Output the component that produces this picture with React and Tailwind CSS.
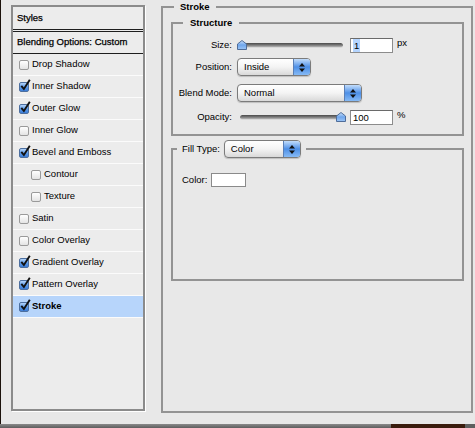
import React from "react";

const items = [
  { label: "Drop Shadow", checked: false },
  { label: "Inner Shadow", checked: true },
  { label: "Outer Glow", checked: true },
  { label: "Inner Glow", checked: false },
  { label: "Bevel and Emboss", checked: true },
  { label: "Contour", checked: false, indent: true },
  { label: "Texture", checked: false, indent: true },
  { label: "Satin", checked: false },
  { label: "Color Overlay", checked: false },
  { label: "Gradient Overlay", checked: true },
  { label: "Pattern Overlay", checked: true },
  { label: "Stroke", checked: true, selected: true },
];

function Check({ checked }) {
  return (
    <span className="relative block w-[10px] h-[10px] shrink-0">
      <span
        className={
          checked
            ? "block w-full h-full rounded-[2px] border border-[#4d6f9f] bg-gradient-to-b from-[#b4d4fa] via-[#5d9be8] to-[#3b7cd6]"
            : "block w-full h-full rounded-[2px] border border-[#9a9a9a] bg-gradient-to-b from-white to-[#e4e4e4]"
        }
      />
      {checked && (
        <svg className="absolute left-[1px] top-[-3px]" width="11" height="12" viewBox="0 0 11 12">
          <path d="M1.3 6.8 L3.9 10 L9.8 0.8" stroke="#111" strokeWidth="1.9" fill="none" />
        </svg>
      )}
    </span>
  );
}

function Arrows() {
  return (
    <svg width="6" height="9" viewBox="0 0 6 9">
      <polygon points="3,0 6,3.5 0,3.5" fill="#111" />
      <polygon points="0,5.5 6,5.5 3,9" fill="#111" />
    </svg>
  );
}

function Select({ w, value }) {
  return (
    <div
      className={`${w} h-[18px] shrink-0 rounded-[4px] border border-[#7b7b7b] flex overflow-hidden bg-gradient-to-b from-white via-[#f4f4f4] to-[#d9d9d9] shadow-[0_1px_1px_rgba(0,0,0,0.18)]`}
    >
      <div className="flex-1 pl-[6px] leading-[16px] text-black">{value}</div>
      <div className="w-[17px] border-l border-[#5a7fb6] bg-gradient-to-b from-[#c2ddfb] via-[#4d8fe6] to-[#86baf5] flex items-center justify-center">
        <Arrows />
      </div>
    </div>
  );
}

function Thumb() {
  return (
    <svg width="10" height="10" viewBox="0 0 10 10">
      <defs>
        <linearGradient id="tg" x1="0" y1="0" x2="0" y2="1">
          <stop offset="0" stopColor="#cfe3fb" />
          <stop offset="0.5" stopColor="#6fa6ec" />
          <stop offset="1" stopColor="#9cc5f6" />
        </linearGradient>
      </defs>
      <polygon points="0.5,9.5 0.5,4 5,0.5 9.5,4 9.5,9.5" fill="url(#tg)" stroke="#4f6d99" strokeWidth="1" />
    </svg>
  );
}

function Slider({ right }) {
  return (
    <div className="relative w-[109px] h-[10px] shrink-0">
      <div className="absolute left-[3px] right-[3px] top-[3px] h-[5px] rounded-full bg-gradient-to-b from-[#4a4a4a] via-[#777] to-[#b5b5b5] border-b border-[#d8d8d8]" />
      <div className={right ? "absolute top-0 right-[0px]" : "absolute top-0 left-[0px]"}>
        <Thumb />
      </div>
    </div>
  );
}

function Input({ children }) {
  return (
    <div className="w-[43px] h-[15px] shrink-0 bg-white border border-[#8c8c8c] border-t-[#6a6a6a] pl-[2px] leading-[13px] flex items-center">
      {children}
    </div>
  );
}

export default function App() {
  return (
    <div className="w-[475px] h-[428px] overflow-hidden bg-[#e8e8e8] flex flex-col font-['Liberation_Sans',Arial,sans-serif] text-[9.5px] text-black">
      <div className="flex h-[424px]">
        <div className="w-px bg-[#1b110b]" />
        {/* Left styles list */}
        <div className="ml-[10px] mt-[5px] w-[134px] h-[406px] border-2 border-[#8b8b8b] bg-[#ececec] shadow-[1px_1px_0_#fff] flex flex-col">
          <div className="h-[22px] pl-[4px] flex items-center [-webkit-text-stroke:0.25px_#000]">Styles</div>
          <div className="h-[3px] border-y border-[#1e1e1e]" />
          <div className="h-[22px] pl-[4px] flex items-center border-b border-[#1e1e1e] [-webkit-text-stroke:0.25px_#000]">
            Blending Options: Custom
          </div>
          {items.map((it) => (
            <div
              key={it.label}
              className={`h-[22px] border-b border-[#fbfbfb] flex items-center gap-[3px] ${
                it.indent ? "pl-[18px]" : "pl-[6px]"
              } ${it.selected ? "bg-[#b7d5fb] font-bold" : ""}`}
            >
              <Check checked={it.checked} />
              <span>{it.label}</span>
            </div>
          ))}
        </div>

        {/* Right stroke panel */}
        <fieldset className="ml-[16px] w-[312px] h-[413px] border-2 border-[#939393] flex flex-col">
          <legend className="ml-[11px] px-[6px] leading-[14px] font-bold">Stroke</legend>
          <fieldset className="mt-[2px] ml-[8px] w-[293px] border-2 border-[#939393]">
            <legend className="ml-[10px] px-[7px] leading-[14px] font-bold">Structure</legend>
            <div className="flex flex-col pb-[9px]">
              <div className="mt-[7px] h-[16px] flex items-center">
                <div className="w-[59px] text-right">Size:</div>
                <div className="ml-[5px] flex items-center">
                  <Slider />
                </div>
                <div className="ml-[4px]">
                  <Input>
                    <span className="bg-[#b5d5ff] px-[1px]">1</span>
                  </Input>
                </div>
                <div className="ml-[4px] self-start leading-[12px]">px</div>
              </div>
              <div className="mt-[5px] h-[18px] flex items-center">
                <div className="w-[59px] text-right">Position:</div>
                <div className="ml-[5px]">
                  <Select w="w-[74px]" value="Inside" />
                </div>
              </div>
              <div className="mt-[8px] h-[18px] flex items-center">
                <div className="w-[59px] text-right">Blend Mode:</div>
                <div className="ml-[5px]">
                  <Select w="w-[125px]" value="Normal" />
                </div>
              </div>
              <div className="mt-[7px] h-[16px] flex items-center">
                <div className="w-[59px] text-right">Opacity:</div>
                <div className="ml-[5px] flex items-center">
                  <Slider right />
                </div>
                <div className="ml-[4px]">
                  <Input>100</Input>
                </div>
                <div className="ml-[4px] self-start leading-[12px]">%</div>
              </div>
            </div>
          </fieldset>
          <fieldset className="mt-[4px] ml-[8px] w-[293px] h-[141px] border-2 border-[#939393]">
            <legend className="ml-[4px] px-[5px] h-[18px] flex items-center gap-[4px]">
              <span>Fill Type:</span>
              <Select w="w-[77px]" value="Color" />
            </legend>
            <div className="mt-[15px] pl-[9px] h-[14px] flex items-center gap-[4px]">
              <span>Color:</span>
              <div className="w-[35px] h-[14px] bg-white border border-[#8a8a8a]" />
            </div>
          </fieldset>
        </fieldset>
      </div>
      <div className="h-[4px] flex">
        <div className="w-[391px] bg-gradient-to-b from-[#8a8a8a] to-[#5f5f5f]" />
        <div className="w-[74px] bg-[#3a1c0d]" />
        <div className="flex-1 bg-[#5f5f5f]" />
      </div>
    </div>
  );
}
